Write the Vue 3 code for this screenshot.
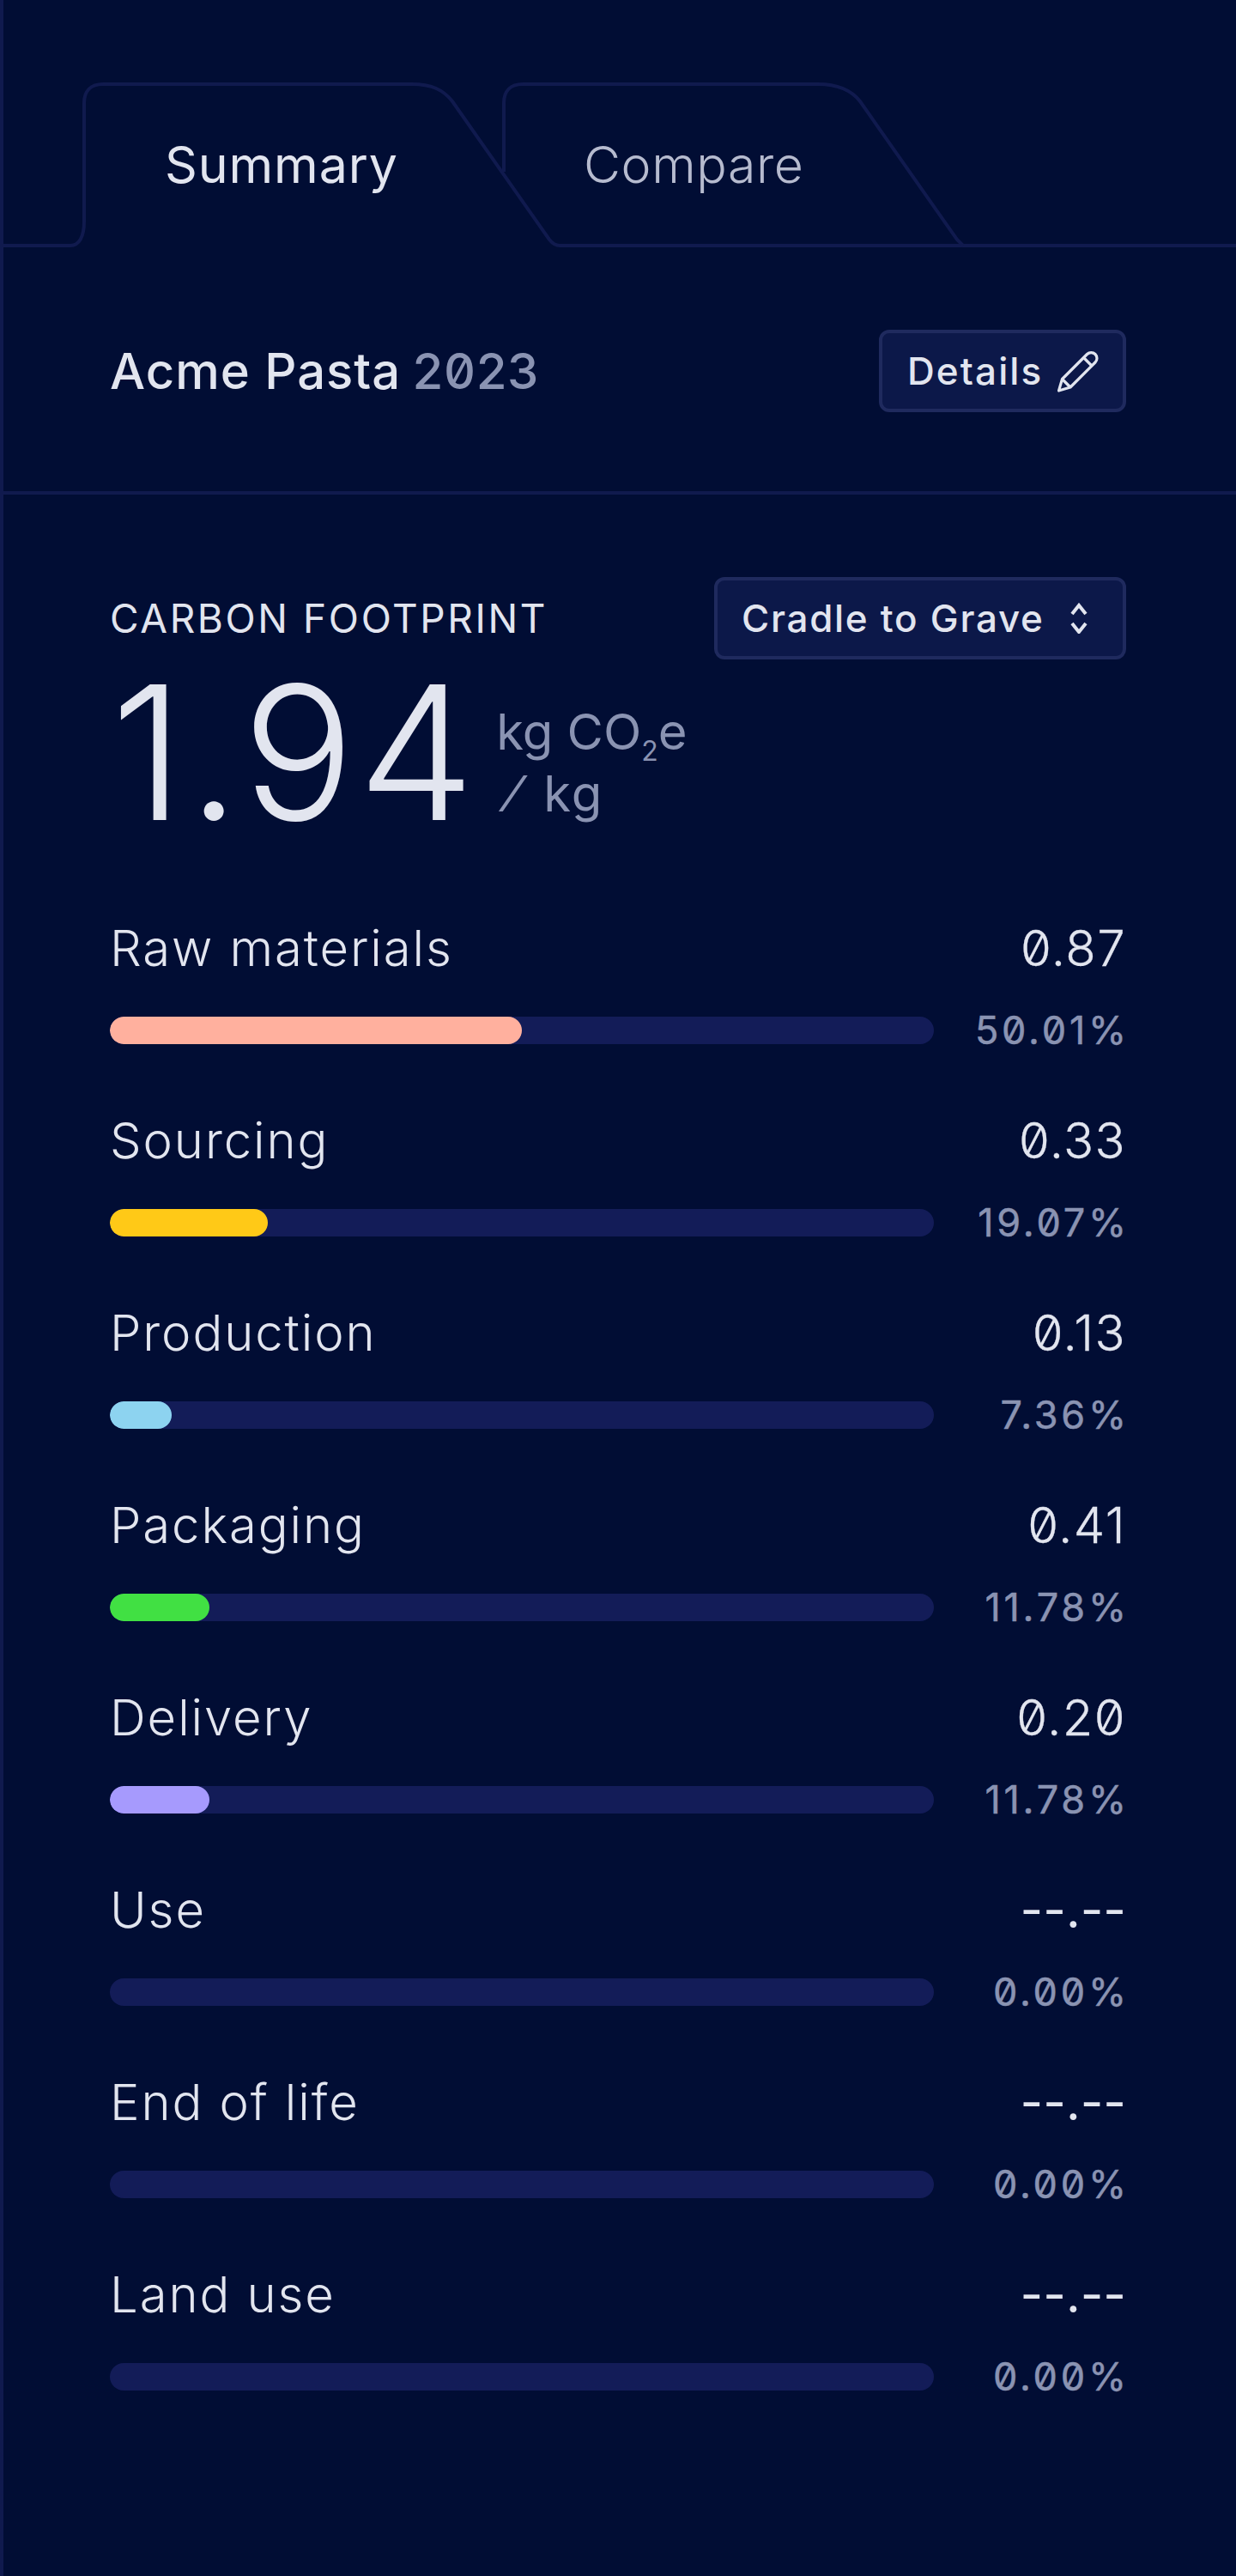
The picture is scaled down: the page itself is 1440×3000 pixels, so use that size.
<script setup>
const rows = [
  { label: 'Raw materials', value: '0.87', pct: '50.01%', width: 50, color: '#ffb09e' },
  { label: 'Sourcing', value: '0.33', pct: '19.07%', width: 19.17, color: '#ffc917' },
  { label: 'Production', value: '0.13', pct: '7.36%', width: 7.5, color: '#8dd3f0' },
  { label: 'Packaging', value: '0.41', pct: '11.78%', width: 12.08, color: '#41e043' },
  { label: 'Delivery', value: '0.20', pct: '11.78%', width: 12.08, color: '#a69afd' },
  { label: 'Use', value: '--.--', pct: '0.00%', width: 0, color: 'transparent' },
  { label: 'End of life', value: '--.--', pct: '0.00%', width: 0, color: 'transparent' },
  { label: 'Land use', value: '--.--', pct: '0.00%', width: 0, color: 'transparent' },
]
</script>

<template>
  <div class="panel">
    <nav class="tabs">
      <svg class="tab-lines" width="1436" height="192" viewBox="4 96 1436 192" fill="none">
        <path d="M4 286H82C92 286 98 276 98 258V120C98 106 106 98 120 98H480C502 98 516 104 527 118L640 279C644 284 647 286 652 286H1440" />
        <path d="M587 200V120C587 106 595 98 609 98H953C975 98 991 104 1002 118L1115 279L1122 286" />
      </svg>
      <div class="tab tab-one active">Summary</div>
      <div class="tab tab-two">Compare</div>
    </nav>

    <header class="product">
      <h1 class="title">Acme Pasta <span class="year">2023</span></h1>
      <button class="chip details">
        <span>Details</span>
        <svg class="pencil" width="48" height="50" viewBox="0 0 48 50" fill="none">
          <path d="M1.5 48L5.5 34.5L34.5 5.5A6.6 6.6 0 0 1 44 15L15 44Z" />
          <path d="M5.5 34.5L15 44M30.5 9.5L40 19" />
        </svg>
      </button>
    </header>

    <section class="footprint">
      <div class="head">
        <h2 class="eyebrow">CARBON FOOTPRINT</h2>
        <button class="chip scope">
          <span>Cradle to Grave</span>
          <svg class="updown" width="20" height="36" viewBox="0 0 20 36" fill="none">
            <path d="M2 13L10 3L18 13M2 24L10 34L18 24" />
          </svg>
        </button>
      </div>

      <div class="total">
        <div class="number">1.94</div>
        <div class="unit">kg CO<sub>2</sub>e<br /><span class="slash">⁄</span><span class="per">kg</span></div>
      </div>

      <ul class="rows">
        <li v-for="row in rows" :key="row.label" class="row">
          <div class="line">
            <span class="label">{{ row.label }}</span>
            <span class="value" :class="{ empty: row.value === '--.--' }">{{ row.value }}</span>
          </div>
          <div class="meter">
            <div class="track">
              <div class="fill" :style="{ width: row.width + '%', background: row.color }"></div>
            </div>
            <span class="pct">{{ row.pct }}</span>
          </div>
        </li>
      </ul>
    </section>
  </div>
</template>

<style scoped>
.panel {
  width: 1440px;
  height: 3000px;
  box-sizing: border-box;
  background: #010d34;
  border-left: 4px solid #101a4e;
  color: #e2e5ef;
  font-family: Inter, "Liberation Sans", sans-serif;
  font-feature-settings: "zero" 1;
  overflow: hidden;
}
.tabs {
  position: relative;
  display: flex;
  height: 288px;
  box-sizing: border-box;
  padding: 156px 0 0 188px;
  font-size: 59px;
  line-height: 72px;
}
.tab-lines {
  position: absolute;
  left: 0;
  top: 96px;
}
.tab-lines path {
  stroke: #101a4e;
  stroke-width: 4;
}
.tab {
  position: relative;
  font-weight: 300;
  color: #b6bbcf;
  letter-spacing: 0.6px;
}
.tab-one {
  width: 488px;
  font-weight: 400;
  color: #e2e5ef;
  letter-spacing: 0.9px;
}
.product {
  display: flex;
  justify-content: space-between;
  align-items: center;
  height: 288px;
  box-sizing: border-box;
  padding: 96px 128px 92px 124px;
  border-bottom: 4px solid #101a4e;
}
.title {
  margin: 0;
  font-size: 58px;
  line-height: 72px;
  font-weight: 500;
  letter-spacing: 1px;
}
.year {
  margin-left: -4px;
  color: #8a93b2;
  font-feature-settings: "zero" 1, "tnum" 1;
  letter-spacing: -0.5px;
}
.chip {
  display: flex;
  align-items: center;
  justify-content: space-between;
  height: 96px;
  box-sizing: border-box;
  border: 4px solid #1f2a5e;
  border-radius: 12px;
  background: #0c1849;
  color: #e2e5ef;
  font-family: inherit;
  font-feature-settings: inherit;
  font-size: 44px;
  font-weight: 500;
}
.details {
  width: 288px;
  padding: 0 28px 0 29px;
  letter-spacing: 2.1px;
}
.pencil path {
  stroke: #e2e5ef;
  stroke-width: 3.2;
  stroke-linejoin: round;
}
.footprint {
  padding: 96px 128px 0 124px;
}
.head {
  display: flex;
  justify-content: space-between;
  align-items: center;
}
.eyebrow {
  margin: 0;
  font-size: 46px;
  font-weight: 400;
  letter-spacing: 2.6px;
}
.scope {
  width: 480px;
  padding: 0 41px 0 28px;
  letter-spacing: 1.7px;
}
.updown path {
  stroke: #e2e5ef;
  stroke-width: 4;
}
.total {
  display: flex;
  gap: 21px;
  height: 217px;
  padding-left: 1px;
}
.number {
  font-size: 217px;
  line-height: 217px;
  font-weight: 300;
  letter-spacing: 4px;
}
.unit {
  margin-top: 48px;
  font-size: 58px;
  line-height: 72px;
  color: #8a93b2;
}
.unit sub {
  font-size: 32px;
  line-height: 0;
}
.slash {
  margin: 0 30px 0 14px;
}
.per {
  letter-spacing: 2px;
}
.rows {
  list-style: none;
  margin: 83px 0 0;
  padding: 0;
}
.row {
  height: 224px;
}
.line {
  display: flex;
  justify-content: space-between;
  font-size: 58px;
  line-height: 72px;
  font-weight: 300;
}
.label {
  letter-spacing: 1.9px;
}
.value {
  letter-spacing: 1.4px;
  -webkit-text-stroke: 0.3px #e2e5ef;
}
.value.empty {
  font-weight: 400;
  letter-spacing: 0;
  -webkit-text-stroke: 0;
}
.meter {
  display: flex;
  justify-content: space-between;
  align-items: center;
  height: 32px;
  margin-top: 44px;
}
.track {
  width: 960px;
  height: 32px;
  border-radius: 16px;
  background: #131c58;
  overflow: hidden;
}
.fill {
  height: 100%;
  border-radius: 16px;
}
.pct {
  margin-right: -4px;
  font-size: 45px;
  letter-spacing: 3.8px;
  line-height: 32px;
  color: #8a93b2;
  -webkit-text-stroke: 0.5px #8a93b2;
}
</style>
